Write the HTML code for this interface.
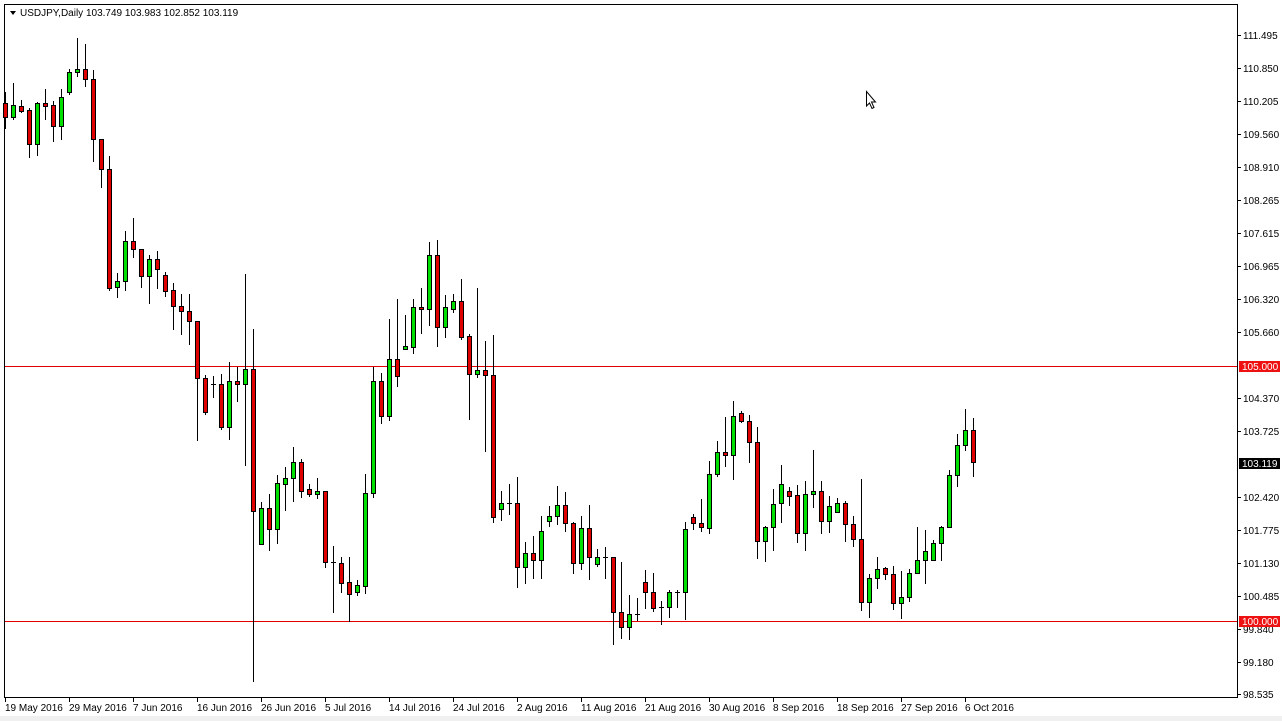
<!DOCTYPE html>
<html><head><meta charset="utf-8"><style>
html,body{margin:0;padding:0;background:#fff;width:1282px;height:721px;overflow:hidden}
svg{display:block;font-family:"Liberation Sans",Tahoma,sans-serif}
</style></head><body>
<svg id="c" width="1282" height="721" viewBox="0 0 1282 721" xmlns="http://www.w3.org/2000/svg">
<rect x="0" y="0" width="1282" height="721" fill="#fff"/>
<rect x="0" y="716" width="1282" height="5" fill="#f0f0f0"/>
<line x1="4.5" y1="4" x2="4.5" y2="698" stroke="#000"/>
<line x1="4" y1="4.5" x2="1238" y2="4.5" stroke="#000"/>
<line x1="1237.5" y1="4" x2="1237.5" y2="698" stroke="#000"/>
<line x1="4" y1="697.5" x2="1238" y2="697.5" stroke="#000"/>
<rect x="5" y="366" width="1232" height="1" fill="#e00000"/>
<rect x="5" y="621" width="1232" height="1" fill="#e00000"/>
<g id="cd"></g>
<g id="ax" font-size="10" fill="#000"></g>
<path d="M10 11 L16 11 L13 15 Z" fill="#000"/>
<text x="20" y="16" font-size="10">USDJPY,Daily  103.749 103.983 102.852 103.119</text>
<path d="M866.5 91.5 L866.5 106 L869.5 103 L872 108.5 L874 107.5 L871.5 102 L875.5 102 Z" fill="#fff" stroke="#000" stroke-width="1"/>
</svg>
<script>
var d=[
[92,128,103,117,'r'],[83,119,105,117,'g'],[100,112,106,111,'r'],[108,157,110,144,'r'],[102,155,103,144,'g'],
[89,119,103,106,'r'],[101,141,105,126,'r'],[89,139,97,126,'g'],[69,94,72,92,'g'],[38,76,69,72,'g'],
[44,86,69,79,'r'],[70,161,79,139,'r'],[139,187,139,169,'r'],[156,290,169,288,'r'],[273,297,281,287,'g'],
[231,290,241,281,'g'],[218,257,241,249,'r'],[249,287,249,276,'r'],[255,303,259,276,'g'],[251,288,259,269,'r'],
[272,296,275,291,'r'],[283,329,290,306,'r'],[294,334,306,311,'r'],[294,344,311,321,'r'],[321,440,321,378,'r'],
[375,414,378,412,'r'],[376,397,384,384,'k'],[374,429,384,427,'r'],[362,439,381,427,'g'],[367,401,381,384,'r'],
[274,465,369,384,'g'],[329,681,369,511,'r'],[502,544,508,544,'g'],[494,550,508,529,'r'],[475,543,483,529,'g'],
[467,510,478,484,'g'],[447,501,462,478,'g'],[459,497,462,491,'r'],[484,496,489,494,'r'],[478,498,491,494,'g'],
[491,567,491,562,'r'],[546,612,562,562,'k'],[557,592,563,583,'r'],[557,621,582,594,'r'],[580,595,585,592,'g'],
[474,593,493,586,'g'],[367,497,381,493,'g'],[373,423,381,416,'r'],[319,420,359,416,'g'],[299,386,359,376,'r'],
[315,349,346,349,'g'],[299,353,307,347,'g'],[288,333,307,309,'r'],[242,325,255,309,'g'],[240,346,255,327,'r'],
[295,337,307,327,'g'],[294,312,301,309,'g'],[279,339,301,337,'r'],[334,419,336,374,'r'],[288,377,370,374,'g'],
[341,451,370,375,'r'],[335,522,375,517,'r'],[491,520,503,509,'g'],[484,514,503,503,'k'],[477,587,503,567,'r'],
[542,583,553,567,'g'],[536,578,553,560,'r'],[516,578,531,560,'g'],[506,526,516,521,'g'],[486,524,505,516,'g'],
[492,531,505,523,'r'],[522,573,523,563,'r'],[516,569,528,563,'g'],[505,579,528,557,'r'],[549,566,557,564,'g'],
[547,578,557,557,'k'],[557,644,557,612,'r'],[562,638,612,627,'r'],[595,639,614,627,'g'],[598,620,614,614,'k'],
[570,608,582,592,'r'],[573,611,592,608,'r'],[601,624,607,607,'k'],[590,617,592,607,'g'],[590,607,592,592,'k'],
[522,619,529,592,'g'],[514,529,517,523,'r'],[499,531,523,527,'r'],[461,533,474,528,'g'],[441,476,452,474,'g'],
[417,466,452,455,'r'],[401,479,416,455,'g'],[411,422,413,421,'r'],[415,462,421,442,'r'],[427,558,442,541,'r'],
[526,561,527,541,'g'],[489,550,504,527,'g'],[465,522,484,503,'g'],[487,505,491,496,'r'],[485,542,495,533,'r'],
[481,550,494,533,'g'],[450,507,491,494,'g'],[481,533,491,521,'r'],[496,532,506,521,'g'],[498,512,503,512,'g'],
[501,541,503,524,'r'],[516,546,524,539,'r'],[479,610,539,602,'r'],[574,617,578,602,'g'],[557,588,569,578,'g'],
[567,579,568,574,'r'],[566,609,574,603,'r'],[571,618,597,603,'g'],[569,601,573,597,'g'],[527,573,560,573,'g'],
[530,583,551,560,'g'],[540,560,543,560,'g'],[526,560,527,543,'g'],[470,527,475,527,'g'],[434,486,445,475,'g'],
[409,450,430,445,'g'],[418,476,430,462,'r']];
var NS="http://www.w3.org/2000/svg",g=document.getElementById('cd');
function el(n,a,p){var e=document.createElementNS(NS,n);for(var k in a)e.setAttribute(k,a[k]);(p||g).appendChild(e);return e;}
for(var i=0;i<d.length;i++){var c=d[i],x=5+8*i;if(x<5)continue;
 el('line',{x1:x+0.5,y1:c[0],x2:x+0.5,y2:c[1]+1,stroke:'#000'});
 var h=c[3]-c[2];
 if(c[4]=='k'||h<1){el('line',{x1:x-2,y1:c[2]+0.5,x2:x+3,y2:c[2]+0.5,stroke:'#000'});}
 else{el('rect',{x:x-1.5,y:c[2]+0.5,width:4,height:h,fill:c[4]=='g'?'#00e000':'#e00000',stroke:'#000','stroke-width':1});}
}
var ax=document.getElementById('ax');
var P=[['111.495',35],['110.850',68],['110.205',101],['109.560',134],['108.910',167],['108.265',200],['107.615',233],['106.965',266],['106.320',299],['105.660',332],['104.370',398],['103.725',431],['102.420',497],['101.775',530],['101.130',563],['100.485',596],['99.840',629],['99.180',662],['98.535',694]];
P.forEach(function(p){el('line',{x1:1238,y1:p[1]+0.5,x2:1241,y2:p[1]+0.5,stroke:'#000'},ax);var t=el('text',{x:1243,y:p[1]+4},ax);t.textContent=p[0];});
function lab(txt,y,bg,fg){el('rect',{x:1239,y:y-5,width:41,height:11,fill:bg},ax);var t=el('text',{x:1242,y:y+4,fill:fg},ax);t.textContent=txt;}
lab('105.000',366,'#ee1111','#fff');lab('103.119',463,'#000','#fff');lab('100.000',621,'#ee1111','#fff');
var D=['19 May 2016','29 May 2016','7 Jun 2016','16 Jun 2016','26 Jun 2016','5 Jul 2016','14 Jul 2016','24 Jul 2016','2 Aug 2016','11 Aug 2016','21 Aug 2016','30 Aug 2016','8 Sep 2016','18 Sep 2016','27 Sep 2016','6 Oct 2016'];
D.forEach(function(s,i){var x=5+64*i;el('line',{x1:x+0.5,y1:698,x2:x+0.5,y2:702,stroke:'#000'},ax);var t=el('text',{x:x,y:711},ax);t.textContent=s;});
</script>
</body></html>
